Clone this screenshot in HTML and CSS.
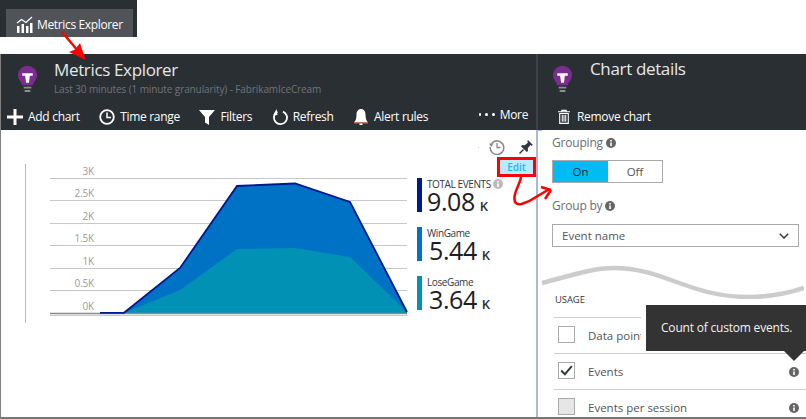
FILE: index.html
```html
<!DOCTYPE html>
<html lang="en">
<head>
<meta charset="utf-8">
<title>Metrics Explorer</title>
<link rel="stylesheet" href="styles.css">
</head>
<body>
<div class="page">
  <div class="topbar">
    <div class="tab">
      <svg class="tab-icon" viewBox="0 0 17 17"><path d="M1 17V10h2.500v7zM5.500 17V8H8v9zM10 17V10h2.500v7zM14 17V7h2.500v10z" fill="#fff"/><path d="M1 7l4.500-3.500L10 6.500 16 1" fill="none" stroke="#fff" stroke-width="1.200"/></svg>
      <span>Metrics Explorer</span>
    </div>
  </div>
  <div class="blades">
    <section class="blade blade-main">
      <header class="blade-head">
        <div class="title-row">
          <svg class="bulb" viewBox="0 0 22 30"><path d="M11 1a10 10 0 0 0-10 10c0 4 2.500 6 3.500 8 .5 1 .5 2 1 2.500h11c.5-.5.5-1.500 1-2.500 1-2 3.500-4 3.500-8A10 10 0 0 0 11 1z" fill="#7a2d8f"/><path d="M5.500 9h11v2.500h-3L12.500 19h-3l-1-7.500h-3z" fill="#fff"/><path d="M7 23h8v2H7zM8 26.500h6v2H8z" fill="#8b8f93"/></svg>
          <div class="titles">
            <h1 class="title">Metrics Explorer</h1>
            <p class="subtitle">Last 30 minutes (1 minute granularity) - FabrikamIceCream</p>
          </div>
        </div>
        <nav class="commands">
          <span class="cmd"><svg class="cmd-icon" viewBox="0 0 16 16"><path d="M6.500 0h3v6.500H16v3H9.500V16h-3V9.500H0v-3h6.500z" fill="#fff"/></svg>Add chart</span>
          <span class="cmd"><svg class="cmd-icon" viewBox="0 0 16 16"><circle cx="8" cy="8" r="6.800" fill="none" stroke="#fff" stroke-width="1.800"/><path d="M8 3.500V8.500H12" fill="none" stroke="#fff" stroke-width="1.500"/></svg>Time range</span>
          <span class="cmd"><svg class="cmd-icon" viewBox="0 0 16 16"><path d="M0 1h16L10 8v8l-4-2.500V8z" fill="#fff"/></svg>Filters</span>
          <span class="cmd"><svg class="cmd-icon" viewBox="0 0 16 16"><path d="M5.500 2.800A6.500 6.500 0 1 0 11 2.600" fill="none" stroke="#fff" stroke-width="1.800"/><path d="M5 0v6H0.500z" fill="#fff" transform="rotate(-8 5 3)"/></svg>Refresh</span>
          <span class="cmd"><svg class="cmd-icon" viewBox="0 0 16 16"><path d="M8 0c3 0 4.500 2.500 4.500 5.500 0 3 .5 6 2.500 8H1c2-2 2.500-5 2.500-8C3.500 2.500 5 0 8 0z" fill="#fff"/><path d="M1 14h14" stroke="#d8632c" stroke-width="1"/><path d="M6.500 14.500h3V16h-3z" fill="#fff"/></svg>Alert rules</span>
          <span class="cmd cmd-more"><span class="dots"><i></i><i></i><i></i></span>More</span>
        </nav>
      </header>
      <div class="main-body">
        <svg class="chart" viewBox="1 130 416 285" role="img" aria-label="Events area chart">
          <path d="M25.500 164V323" stroke="#bbb" stroke-width="1"/>
          <g stroke="#c8c8c8" stroke-width="1">
            <path d="M50 178.500H407M50 200.500H407M50 223.500H407M50 245.500H407M50 268.500H407M50 290.500H407M50 315.500H407"/>
          </g>
          <g class="axis">
            <text x="94" y="175">3K</text>
            <text x="94" y="197">2.5K</text>
            <text x="94" y="220">2K</text>
            <text x="94" y="242">1.5K</text>
            <text x="94" y="265">1K</text>
            <text x="94" y="287">0.5K</text>
            <text x="94" y="310">0K</text>
          </g>
          <path d="M124 313L180 268 237 186 295 183.500 350 202 407 312V313H124z" fill="#0072c6"/>
          <path d="M124 313L180 290 237 249 295 248 350 257 407 312V313H124z" fill="#0091b4"/>
          <path d="M50 313.500H407" stroke="#888" stroke-width="1.500"/>
          <path d="M100 312.800H124L180 268 237 186 295 183.500 350 202 407 312" fill="none" stroke="#00188f" stroke-width="1.800"/>
        </svg>
        <aside class="side">
          <div class="tools">
            <i class="speck"></i>
            <svg class="tool-history" viewBox="0 0 16 16"><path d="M2.600 4.500A6.800 6.800 0 1 1 1.200 8" fill="none" stroke="#8a8a8a" stroke-width="1.500"/><path d="M0 4.500h4.500L2.200 8z" fill="#8a8a8a"/><path d="M8 4v4.500h3.500" fill="none" stroke="#8a8a8a" stroke-width="1.300"/></svg>
            <svg class="tool-pin" viewBox="0 0 14 14"><path d="M9 0l5 5-1.500.8L11.500 5 8.800 8.200 9 11 7.800 12 2 6.200 3 5l2.800.2L9 2.500 8.200 1.500z" fill="#32383d"/><path d="M4.500 9.500L.5 13.500" stroke="#32383d" stroke-width="1.400"/></svg>
          </div>
          <div class="edit-frame"><button class="edit" type="button">Edit</button></div>
          <ul class="legend">
            <li class="legend-item">
              <i class="swatch swatch-total"></i>
              <div>
                <div class="legend-label">TOTAL EVENTS <svg class="info info-light" viewBox="0 0 10 10"><circle cx="5" cy="5" r="5"/><path d="M4.200 2h1.600v1.500H4.200zM4.200 4.500h1.600V8H4.200z" fill="#fff"/></svg></div>
                <div class="legend-value">9.08<small>K</small></div>
              </div>
            </li>
            <li class="legend-item">
              <i class="swatch swatch-win"></i>
              <div>
                <div class="legend-label">WinGame</div>
                <div class="legend-value legend-value-inset">5.44<small>K</small></div>
              </div>
            </li>
            <li class="legend-item">
              <i class="swatch swatch-lose"></i>
              <div>
                <div class="legend-label">LoseGame</div>
                <div class="legend-value legend-value-inset">3.64<small>K</small></div>
              </div>
            </li>
          </ul>
        </aside>
      </div>
    </section>
    <section class="blade blade-details">
      <header class="blade-head">
        <div class="title-row">
          <svg class="bulb" viewBox="0 0 22 30"><path d="M11 1a10 10 0 0 0-10 10c0 4 2.500 6 3.500 8 .5 1 .5 2 1 2.500h11c.5-.5.5-1.500 1-2.500 1-2 3.500-4 3.500-8A10 10 0 0 0 11 1z" fill="#7a2d8f"/><path d="M5.500 9h11v2.500h-3L12.500 19h-3l-1-7.500h-3z" fill="#fff"/><path d="M7 23h8v2H7zM8 26.500h6v2H8z" fill="#8b8f93"/></svg>
          <div class="titles"><h2 class="title title-details">Chart details</h2></div>
        </div>
        <nav class="commands">
          <span class="cmd"><svg class="cmd-icon cmd-trash" viewBox="0 0 14 16"><path d="M0 2.500h14M4.500 2.500V.8h5v1.700" fill="none" stroke="#fff" stroke-width="1.300"/><path d="M2 4.500h10V16H2z" fill="none" stroke="#fff" stroke-width="1.300"/><path d="M5 6v8M7 6v8M9 6v8" stroke="#fff" stroke-width="1.200"/></svg>Remove chart</span>
        </nav>
      </header>
      <div class="details-body">
        <div class="field-label">Grouping <svg class="info" viewBox="0 0 10 10"><circle cx="5" cy="5" r="5"/><path d="M4.200 2h1.600v1.500H4.200zM4.200 4.500h1.600V8H4.200z" fill="#fff"/></svg></div>
        <div class="toggle"><span class="toggle-on">On</span><span class="toggle-off">Off</span></div>
        <div class="field-label field-group">Group by <svg class="info" viewBox="0 0 10 10"><circle cx="5" cy="5" r="5"/><path d="M4.200 2h1.600v1.500H4.200zM4.200 4.500h1.600V8H4.200z" fill="#fff"/></svg></div>
        <div class="select"><span>Event name</span><svg class="chevron" viewBox="0 0 10 6"><path d="M.8.8L5 5 9.200.8" fill="none" stroke="#32383d" stroke-width="1.500"/></svg></div>
        <svg class="wave" viewBox="0 0 268 40" preserveAspectRatio="none"><path d="M6 26C30 20 55 11 78 11c50 0 75 29 135 29 20 0 40-4 55-9" fill="none" stroke="#ccc" stroke-width="4.500" transform="translate(0 -2)"/></svg>
        <div class="usage-head">USAGE</div>
        <ul class="metrics">
          <li class="metric"><i class="box"></i><span>Data points</span></li>
          <li class="metric"><i class="box"><svg viewBox="0 0 14 14"><path d="M2 7l3.500 3.500L12 3" fill="none" stroke="#32383d" stroke-width="1.800"/></svg></i><span>Events</span><svg class="info metric-info" viewBox="0 0 10 10"><circle cx="5" cy="5" r="5"/><path d="M4.200 2h1.600v1.500H4.200zM4.200 4.500h1.600V8H4.200z" fill="#fff"/></svg></li>
          <li class="metric metric-last"><i class="box box-off"></i><span>Events per session</span><svg class="info metric-info" viewBox="0 0 10 10"><circle cx="5" cy="5" r="5"/><path d="M4.200 2h1.600v1.500H4.200zM4.200 4.500h1.600V8H4.200z" fill="#fff"/></svg></li>
        </ul>
        <div class="tooltip">Count of custom events.</div>
      </div>
    </section>
  </div>
  <svg class="annotations" viewBox="0 0 806 419" aria-hidden="true">
    <path d="M62 32L84 58" stroke="#f00" stroke-width="2.500" fill="none"/>
    <path d="M85.500 60L69 52 75 49.500 80 43z" fill="#f00"/>
    <path d="M521 177c-1 7-6 13-6.500 20-.5 6 2 8 7 7 5-1.500 12-5 17-8.500l11-6.500" fill="none" stroke="#f00" stroke-width="2.500"/>
    <path d="M551 190L541 187M551 190L545 199" fill="none" stroke="#f00" stroke-width="2.500"/>
  </svg>
</div>
</body>
</html>
```

FILE: styles.css
```css
* { box-sizing: border-box; }
html, body { margin: 0; padding: 0; background: #fff; }
body { font-family: "Open Sans", "Liberation Sans", sans-serif; overflow: hidden; }
ul { list-style: none; margin: 0; padding: 0; }
h1, h2, p { margin: 0; font-weight: 400; }
.page { position: relative; width: 806px; height: 419px; overflow: hidden; display: flex; flex-direction: column; }
.topbar { width: 137px; height: 37px; background: #2a2f34; padding: 9px 4px 0 6px; flex: none; }
.tab { height: 28px; background: #505358; color: #fff; display: flex; align-items: center; padding: 2px 0 0 10px; gap: 4px; font-size: 12px; letter-spacing: -.35px; white-space: nowrap; }
.tab-icon { width: 17px; height: 17px; flex: none; }
.blades { margin-top: 17px; height: 365px; display: flex; border-bottom: 2px solid #777; border-left: 1px solid #808080; flex: none; }
.blade { display: flex; flex-direction: column; position: relative; }
.blade-main { width: 535px; flex: none; }
.blade-details { flex: 1; min-width: 0; }
.blade-head { height: 76px; background: #2a2f34; color: #fff; flex: none; display: flex; flex-direction: column; }
.blade-details .blade-head { border-left: 2px solid #3d4347; }
.title-row { height: 49px; display: flex; padding: 8px 0 0 16px; gap: 16px; }
.blade-details .title-row { padding-left: 14px; gap: 17px; }
.bulb { width: 21px; height: 30px; flex: none; margin-top: 2px; }
.title { font-size: 17px; line-height: 20px; letter-spacing: -.35px; color: #e6e7e8; white-space: nowrap; margin-top: -2px; }
.title-details { margin-top: -3px; }
.subtitle { font-size: 10px; line-height: 13px; color: #6f7479; margin-top: 3px; white-space: nowrap; letter-spacing: -.1px; }
.commands { height: 27px; display: flex; align-items: center; padding-left: 6px; font-size: 12px; letter-spacing: -.3px; }
.blade-details .commands { padding-left: 20px; }
.cmd { display: flex; align-items: center; gap: 5px; white-space: nowrap; margin-right: 19.500px; }
.cmd-icon { width: 16px; height: 16px; flex: none; }
.cmd-trash { width: 12px; height: 15px; margin-right: 2px; }
.cmd-more { margin-left: 31px; margin-right: 0; position: relative; top: -2px; }
.dots { display: flex; gap: 4px; width: 16px; }
.dots i { width: 3px; height: 3px; border-radius: 50%; background: #fff; }
.main-body { display: flex; flex: 1; min-height: 0; }
.chart { width: 416px; height: 285px; flex: none; display: block; }
.axis text { font-size: 10px; fill: #9a9a9a; text-anchor: end; font-family: "Open Sans", sans-serif; letter-spacing: -.2px; }
.side { flex: 1; display: flex; flex-direction: column; min-width: 0; }
.tools { height: 27px; display: flex; align-items: center; justify-content: flex-end; padding: 7px 3px 0 0; }
.speck { width: 1px; height: 1px; background: #ccc; margin-right: 10px; }
.tool-history { width: 16px; height: 16px; margin-right: 14px; }
.tool-pin { width: 14px; height: 14px; }
.edit-frame { align-self: flex-end; width: 39px; height: 20px; border: 3px solid #f00; flex: none; }
.edit { display: block; width: 100%; height: 100%; border: 0; padding: 0; background: #b8ecfc; color: #1ab6ee; font: 600 10px "Open Sans", sans-serif; }
.legend { margin-top: 1px; display: flex; flex-direction: column; gap: 15px; }
.legend-item { display: flex; height: 34px; gap: 5px; }
.swatch { width: 5px; height: 34px; flex: none; }
.swatch-total { background: #00188f; }
.swatch-win { background: #0072c6; }
.swatch-lose { background: #0091b4; }
.legend-label { font-size: 10px; line-height: 11px; color: #32383d; white-space: nowrap; letter-spacing: -.4px; margin-top: 1px; }
.legend-value { font-size: 25px; line-height: 23px; color: #1c2024; letter-spacing: -.4px; white-space: nowrap; }
.legend-value-inset { padding-left: 2px; }
.legend-value small { font-size: 13px; font-weight: 600; margin-left: 5px; color: #2a2f34; }
.info { width: 10px; height: 10px; fill: #666; vertical-align: -1px; }
.info-light { fill: #bbb; }
.details-body { flex: 1; position: relative; padding: 5px 0 0 14px; min-height: 0; border-left: 2px solid #a9b9d9; overflow: hidden; }
.details-body::before { content: ""; position: absolute; left: 0; top: 0; width: 4px; height: 1px; background: #a9b9d9; }
.field-label { font-size: 12px; line-height: 16px; color: #6b6f73; letter-spacing: -.2px; }
.field-group { margin-top: 15px; }
.toggle { width: 111px; height: 23px; margin-top: 9px; display: flex; border: 1px solid #aaa; font-size: 11.500px; line-height: 21px; text-align: center; }
.toggle-on { width: 55px; background: #00bcf2; color: #1f2a30; }
.toggle-off { flex: 1; color: #555; }
.select { width: 247px; height: 23px; margin-top: 10px; border: 1px solid #aaa; display: flex; align-items: center; justify-content: space-between; padding: 0 9px; font-size: 11.500px; color: #555; }
.chevron { width: 10px; height: 6px; }
.wave { display: block; width: 268px; height: 40px; margin: 12px 0 0 -16px; }
.usage-head { font-size: 9.500px; line-height: 13px; color: #32383d; margin: -6px 0 0 3px; letter-spacing: -.1px; }
.metrics { margin: 11px 0 0 2px; }
.metric { height: 36px; border-top: 1px solid #ccc; display: flex; align-items: center; padding: 0 7px 0 4px; font-size: 11.500px; color: #555; }
.metric-last { height: 28px; padding-top: 8px; }
.box { width: 17px; height: 17px; border: 1px solid #aaa; display: block; flex: none; margin-right: 13px; margin-top: -2px; }
.box svg { display: block; width: 15px; height: 15px; }
.box-off { background: #e6e6e6; }
.metric-info { margin-left: auto; }
.tooltip { position: absolute; left: 108px; top: 175px; width: 160px; height: 46px; background: #333; color: #f2f2f2; font-size: 12px; line-height: 46px; padding-left: 15px; white-space: nowrap; letter-spacing: -.2px; box-shadow: -5px 0 0 #fff; }
.tooltip::after { content: ""; position: absolute; right: 2px; top: 46px; border: 10px solid transparent; border-top: 10px solid #333; border-bottom: 0; }
.annotations { position: absolute; left: 0; top: 0; width: 806px; height: 419px; pointer-events: none; }
```
